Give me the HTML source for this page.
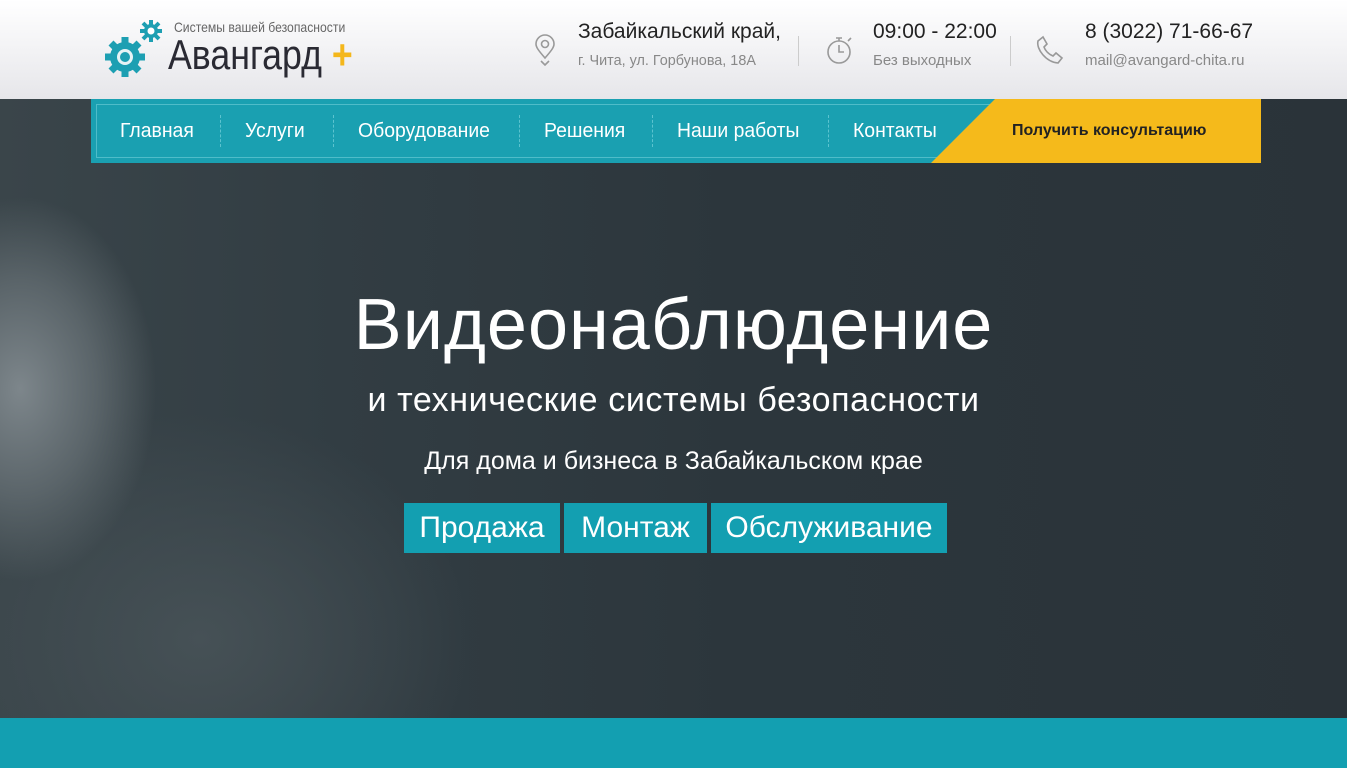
<!DOCTYPE html>
<html><head><meta charset="utf-8"><style>
*{margin:0;padding:0;box-sizing:border-box}
body{width:1347px;height:768px;overflow:hidden;font-family:"Liberation Sans",sans-serif;background:#2b353b;position:relative}
.header{position:absolute;left:0;top:0;width:1347px;height:99px;background:linear-gradient(#fff,#e6e6ea)}
.hero{position:absolute;left:0;top:99px;width:1347px;height:619px;background:
radial-gradient(ellipse 170px 240px at 20px 290px,#7d868b 0%,#5a6469 45%,rgba(0,0,0,0) 80%),
radial-gradient(ellipse 300px 250px at 200px 540px,#465156 0%,rgba(0,0,0,0) 90%),
linear-gradient(90deg,#3a454a 0%,#323d43 25%,#2c363c 55%,#2a3339 100%)}
.band{position:absolute;left:0;top:718px;width:1347px;height:50px;background:#139fb1}
.nav{position:absolute;left:91px;top:99px;width:1170px;height:64px;background:#1aa0b1}
.nav .in{position:absolute;left:5px;top:5px;right:5px;bottom:5px;border:1px solid #4fbcc9}
.nav a{position:absolute;top:21px;color:#fff;font-size:20px;text-decoration:none;transform:scaleX(0.97);transform-origin:left}
.sep{position:absolute;top:16px;height:32px;border-left:1px dashed #5cc3cf}
.yel{position:absolute;left:840px;top:0;width:330px;height:64px;background:#f5ba1b;clip-path:polygon(64px 0,100% 0,100% 100%,0 100%)}
.yel span{position:absolute;left:81px;top:23px;font-weight:bold;font-size:16px;color:#222;transform:scaleX(1.0);transform-origin:left}
.t{position:absolute;white-space:nowrap}
.btn{position:absolute;top:503px;height:50px;background:#139fb1;color:#fff;font-size:30px;line-height:50px;text-align:center}
</style></head><body>
<div class="header">
<svg class="t" style="left:103px;top:18px" width="60" height="62" viewBox="0 0 60 62">
<g fill="#1d9fb2"><circle cx="22" cy="39" r="15"/><g stroke="#1d9fb2" stroke-width="7"><line x1="22" y1="19" x2="22" y2="59"/><line x1="2" y1="39" x2="42" y2="39"/><line x1="8" y1="25" x2="36" y2="53"/><line x1="36" y1="25" x2="8" y2="53"/></g>
<circle cx="48" cy="13" r="7"/><g stroke="#1d9fb2" stroke-width="4"><line x1="48" y1="2" x2="48" y2="24"/><line x1="37" y1="13" x2="59" y2="13"/><line x1="40" y1="5" x2="56" y2="21"/><line x1="56" y1="5" x2="40" y2="21"/></g></g>
<circle cx="22" cy="39" r="8" fill="#e6f3f5"/><circle cx="22" cy="39" r="5" fill="#1d9fb2"/><circle cx="48" cy="13" r="3.5" fill="#fff"/></svg>
<div class="t" style="left:174px;top:19px;font-size:14px;color:#666;transform:scaleX(0.87);transform-origin:left">Системы вашей безопасности</div>
<div class="t" style="left:168px;top:31px;font-size:42px;color:#2a2a33;transform:scaleX(0.85);transform-origin:left">Авангард<span style="color:#f4b71b;font-weight:bold"> +</span></div>
<svg class="t" style="left:533px;top:34px" width="24" height="32" viewBox="0 0 24 32" fill="none" stroke="#999" stroke-width="1.6"><path d="M12 24C5 16 3 13 3 10a9 9 0 0118 0c0 3-2 6-9 14z"/><circle cx="12" cy="10" r="3.5"/><path d="M8 27l4 4 4-4"/></svg>
<div class="t" style="left:578px;top:20px;font-size:21px;color:#222">Забайкальский край,</div>
<div class="t" style="left:578px;top:52px;font-size:15px;color:#888;transform:scaleX(0.96);transform-origin:left">г. Чита, ул. Горбунова, 18А</div>
<div class="t" style="left:798px;top:36px;height:30px;border-left:1px solid #ccc"></div>
<svg class="t" style="left:824px;top:34px" width="32" height="32" viewBox="0 0 32 32" fill="none" stroke="#999" stroke-width="1.6"><circle cx="15" cy="18" r="11"/><path d="M15 11v7h5M12 4h6M15 4v3M24 7l3-3"/></svg>
<div class="t" style="left:873px;top:20px;font-size:21px;color:#222">09:00 - 22:00</div>
<div class="t" style="left:873px;top:52px;font-size:15px;color:#888">Без выходных</div>
<div class="t" style="left:1010px;top:36px;height:30px;border-left:1px solid #ccc"></div>
<svg class="t" style="left:1034px;top:34px" width="32" height="32" viewBox="0 0 32 32" fill="none" stroke="#999" stroke-width="1.6"><path d="M9 3L4 7c-2 8 8 21 20 22l4-5-6-5-3 3C14 20 11 16 10 13l3-3z"/></svg>
<div class="t" style="left:1085px;top:20px;font-size:21px;color:#222">8 (3022) 71-66-67</div>
<div class="t" style="left:1085px;top:52px;font-size:15px;color:#888">mail@avangard-chita.ru</div>
</div>
<div class="hero"></div>
<div class="band"></div>
<div class="nav"><div class="in"></div>
<a style="left:29px">Главная</a><div class="sep" style="left:129px"></div>
<a style="left:154px">Услуги</a><div class="sep" style="left:242px"></div>
<a style="left:267px">Оборудование</a><div class="sep" style="left:428px"></div>
<a style="left:453px">Решения</a><div class="sep" style="left:561px"></div>
<a style="left:586px">Наши работы</a><div class="sep" style="left:737px"></div>
<a style="left:762px">Контакты</a>
<div class="yel"><span>Получить консультацию</span></div>
</div>
<div class="t" style="left:0;width:1347px;text-align:center;top:284px;font-size:72px;color:#fff;letter-spacing:1px">Видеонаблюдение</div>
<div class="t" style="left:0;width:1347px;text-align:center;top:381px;font-size:34px;color:#fff;letter-spacing:0.6px">и технические системы безопасности</div>
<div class="t" style="left:0;width:1347px;text-align:center;top:447px;font-size:25px;color:#fff">Для дома и бизнеса в Забайкальском крае</div>
<div class="btn" style="left:404px;width:156px">Продажа</div>
<div class="btn" style="left:564px;width:143px">Монтаж</div>
<div class="btn" style="left:711px;width:236px">Обслуживание</div>
</body></html>
